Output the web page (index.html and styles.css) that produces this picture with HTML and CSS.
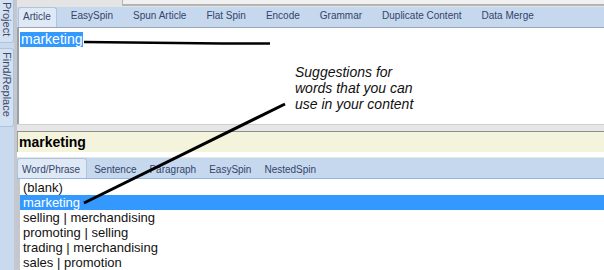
FILE: index.html
```html
<!DOCTYPE html>
<html lang="en">
<head>
  <meta charset="UTF-8">
  <title>Spinner</title>
  <link rel="stylesheet" href="styles.css">
</head>
<body>
  <div class="app">
    <div class="sidebar">
      <div class="vtab vtab-project">Project</div>
      <div class="vtab vtab-find">Find/Replace</div>
    </div>

    <div class="main">
      <div class="topstrip"><div class="topbox"></div></div>

      <div class="tabbar">
        <span class="tab active">Article</span>
        <span class="tab">EasySpin</span>
        <span class="tab">Spun Article</span>
        <span class="tab">Flat Spin</span>
        <span class="tab">Encode</span>
        <span class="tab">Grammar</span>
        <span class="tab">Duplicate Content</span>
        <span class="tab">Data Merge</span>
      </div>

      <div class="editor">
        <span class="selected">marketing</span>
      </div>

      <div class="splitter"></div>

      <div class="wordbar">marketing</div>

      <div class="tabbar tabbar-low">
        <span class="tab active">Word/Phrase</span>
        <span class="tab">Sentence</span>
        <span class="tab">Paragraph</span>
        <span class="tab">EasySpin</span>
        <span class="tab">NestedSpin</span>
      </div>

      <div class="list">
        <div class="item">(blank)</div>
        <div class="item current">marketing</div>
        <div class="item">selling | merchandising</div>
        <div class="item">promoting | selling</div>
        <div class="item">trading | merchandising</div>
        <div class="item">sales | promotion</div>
      </div>
    </div>
  </div>

  <!-- callout drawn over the screenshot -->
  <div class="note">Suggestions for<br>words that you can<br>use in your content</div>
  <svg class="arrows" width="604" height="270" viewBox="0 0 604 270">
    <polyline points="84,42 130,42.5 222,43.5 270,43.5" fill="none" stroke="#000" stroke-width="2.6"/>
    <line x1="285" y1="104" x2="84" y2="203" stroke="#000" stroke-width="3"/>
  </svg>
</body>
</html>
```

FILE: styles.css
```css
/* window layout */
body {
  margin: 0;
  font-family: 'Liberation Sans', Arial, sans-serif;
  background: #fff;
  width: 604px;
  height: 270px;
  overflow: hidden;
  position: relative;
}

.app {
  display: flex;
  height: 270px;
}

.sidebar {
  width: 14px;
  background: #c9daee;
  border-right: 3px solid #c4c8ce;
  display: flex;
  flex-direction: column;
  gap: 5px;
}

.vtab {
  writing-mode: vertical-rl;
  font-size: 11px;
  color: #3c4b66;
  background: #d3e1f2;
  border: 1px solid #aec3dc;
  border-left: none;
  border-radius: 0 3px 3px 0;
  line-height: 12px;
}

.vtab-project {
  height: 40px;
  padding-top: 3px;
  margin-top: -2px;
}

.vtab-find {
  height: 74px;
  padding-top: 3px;
}

.main {
  flex: 1;
  display: flex;
  flex-direction: column;
  min-width: 0;
}

.topstrip {
  height: 7px;
  background: #e4e4e4;
  display: flex;
  padding-left: 105px;
}

.topbox {
  flex: 1;
  background: #f0f0f0;
  border-left: 1px solid #b4b4b4;
  border-bottom: 2px solid #b4b4b4;
  height: 4px;
}

.tabbar {
  height: 20px;
  background: #c6d8ee;
  border-bottom: 1px solid #9aa6b4;
  display: flex;
  align-items: flex-end;
  font-size: 10px;
  color: #34446a;
}

.tab {
  padding: 0 10px 5px 10px;
  line-height: 12px;
}

.tab.active {
  background: #dfe9f6;
  border: 1px solid #aec3dc;
  border-bottom: none;
  border-radius: 3px 3px 0 0;
  padding: 3px 5px 4px 4px;
  margin: 0 4px 0 1px;
}

.editor {
  height: 97px;
  background: #fff;
  border-left: 2px solid #9aa0a8;
  padding: 2px 0 0 1px;
}

.selected {
  background: #3399ff;
  color: #fff;
  font-size: 14px;
  line-height: 15px;
  display: inline-block;
  padding: 0 1px;
}

.splitter {
  height: 6px;
  background: #e6e6e6;
  border-top: 1px solid #d0d0d0;
  border-bottom: 1px solid #8e8e8e;
}

.wordbar {
  height: 20px;
  background: #f4f3dc;
  border-left: 1px solid #9aa0a8;
  font-size: 14px;
  font-weight: bold;
  line-height: 20px;
  padding-left: 1px;
}

.tabbar-low {
  margin-top: 5px;
  border-top: 1px solid #e6e6e6;
  border-bottom: 1px solid #8fb6e6;
}

.tabbar-low .tab {
  padding: 0 6px 2px 6px;
  margin-right: 1px;
}

.tabbar-low .tab.active {
  padding: 5px 6px 2px 4px;
  margin: 0 1px 0 0;
}

.list {
  flex: 1;
  background: #fff;
  border-left: 3px solid #c4c8ce;
  padding-top: 1px;
  font-size: 13px;
}

.item {
  height: 15px;
  line-height: 15px;
  padding-left: 3px;
  color: #111;
}

.item.current {
  background: #3399ff;
  color: #fff;
}

/* annotation callout */
.note {
  position: absolute;
  left: 295px;
  top: 64px;
  font-size: 14px;
  font-style: italic;
  line-height: 16px;
  color: #111;
}

.arrows {
  position: absolute;
  left: 0;
  top: 0;
  pointer-events: none;
}
```
